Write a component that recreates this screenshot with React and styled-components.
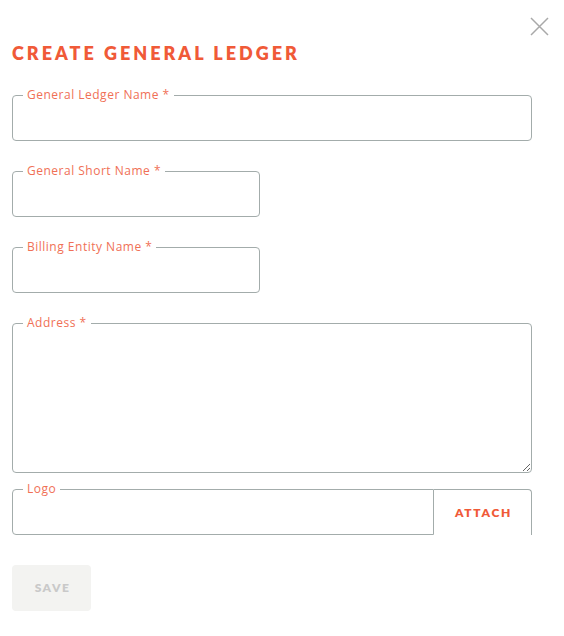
import React from 'react'
import styled, {createGlobalStyle} from 'styled-components'

const Orange = '#f05a38'
const Line = '#a3acab'

const GlobalStyle = createGlobalStyle`
  html, body {
    margin: 0;
    background: #fff;
    font-family: 'Lato', 'Open Sans', sans-serif;
  }
  * { box-sizing: border-box; }
`

const Dialog = styled.div`
  position: relative;
  width: 564px;
  height: 636px;
  padding: 42px 32px 0 12px;
  background: #fff;
`
const Close = styled.button`
  position: absolute;
  top: 17px;
  right: 15px;
  width: 19px;
  height: 19px;
  padding: 0;
  border: 0;
  background: none;
  cursor: pointer;
`
const Title = styled.h2`
  margin: 0 0 24px;
  font-size: 18px;
  line-height: 22px;
  font-weight: 800;
  letter-spacing: 3px;
  color: ${Orange};
`
const Form = styled.form`
  display: flex;
  flex-direction: column;
`
const Field = styled.fieldset`
  margin: 0 0 ${props => props.gap ?? 23}px;
  padding: 0;
  width: ${props => props.half ? '248px' : '520px'};
  border: 1px solid ${Line};
  border-radius: 4px;
  min-width: 0;
  display: flex;
`
const Legend = styled.legend`
  margin-left: 10px;
  padding: 0 4px;
  font-family: 'Open Sans', sans-serif;
  font-size: 12px;
  line-height: 14px;
  letter-spacing: 0.5px;
  color: #f07056;
`
const Input = styled.input`
  flex: 1;
  height: 38px;
  border: 0;
  outline: none;
  padding: 0 14px;
  font: inherit;
  background: transparent;
`
const Area = styled.textarea`
  flex: 1;
  height: 142px;
  border: 0;
  outline: none;
  padding: 8px 14px;
  font: inherit;
  background: transparent;
  border-radius: 0 0 4px 0;
`
const LogoRow = styled.div`
  display: flex;
  width: 520px;
  margin-bottom: 30px;
`
const LogoField = styled(Field)`
  flex: 1;
  width: auto;
  margin: 0;
  border-radius: 4px 0 0 4px;
`
const Attach = styled.button`
  width: 98px;
  margin-top: 7px;
  height: 46px;
  border: 1px solid ${Line};
  border-bottom: 0;
  border-left: 0;
  border-radius: 0 4px 0 0;
  background: #fff;
  color: ${Orange};
  font-family: 'Lato', sans-serif;
  font-size: 12px;
  font-weight: 800;
  letter-spacing: 1.7px;
  padding: 0 0 0 2px;
  cursor: pointer;
`
const Save = styled.button`
  width: 79px;
  height: 46px;
  border: 0;
  border-radius: 4px;
  background: #f3f3f1;
  color: #c9c9c9;
  font-family: 'Lato', sans-serif;
  font-size: 12px;
  font-weight: 800;
  letter-spacing: 1.5px;
  padding: 0 0 1px 2px;
`

export default function App() {
  return (
    <Dialog>
      <GlobalStyle />
      <Close aria-label="close">
        <svg width="19" height="19" viewBox="0 0 19 19">
          <path d="M1 1 L18 18 M18 1 L1 18" stroke="#a9a9a9" strokeWidth="1.5" fill="none" />
        </svg>
      </Close>
      <Title>CREATE GENERAL LEDGER</Title>
      <Form>
        <Field>
          <Legend>General Ledger Name *</Legend>
          <Input />
        </Field>
        <Field half>
          <Legend>General Short Name *</Legend>
          <Input />
        </Field>
        <Field half>
          <Legend>Billing Entity Name *</Legend>
          <Input />
        </Field>
        <Field gap={9}>
          <Legend>Address *</Legend>
          <Area />
        </Field>
        <LogoRow>
          <LogoField>
            <Legend>Logo</Legend>
            <Input />
          </LogoField>
          <Attach type="button">ATTACH</Attach>
        </LogoRow>
        <div>
          <Save type="button" disabled>SAVE</Save>
        </div>
      </Form>
    </Dialog>
  )
}
